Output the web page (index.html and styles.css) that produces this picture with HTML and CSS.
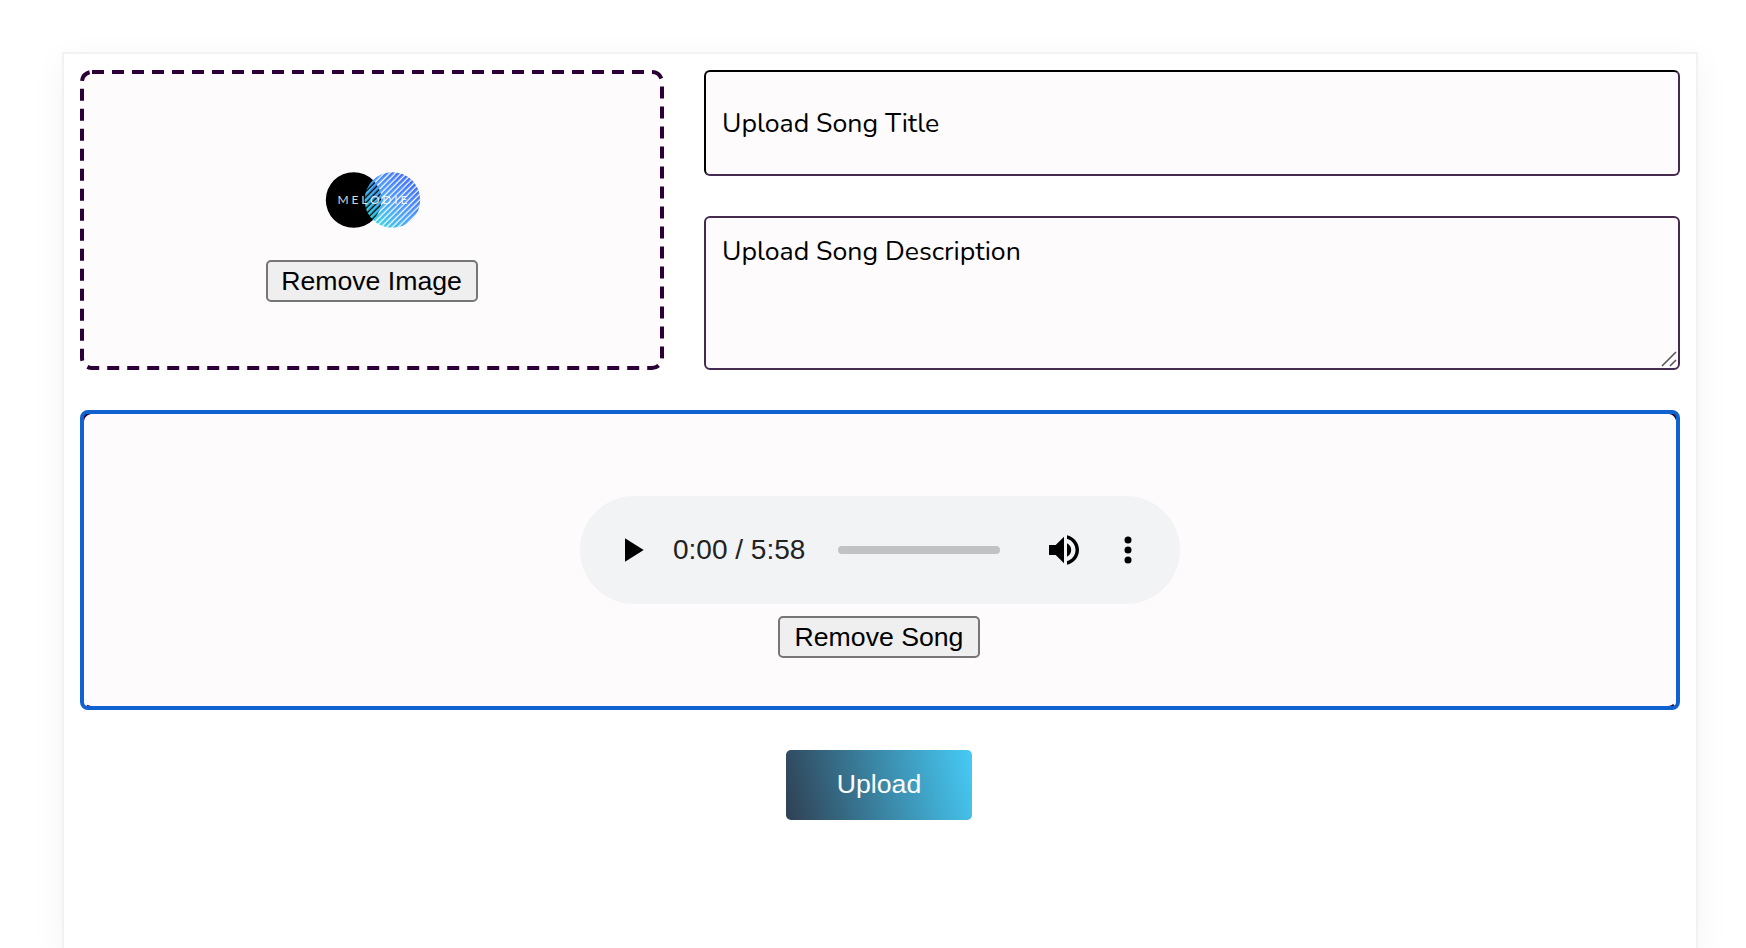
FILE: index.html
```html
<!DOCTYPE html>
<html lang="en">
<head>
<meta charset="utf-8">
<title>Upload Song</title>
<link rel="stylesheet" href="styles.css">
</head>
<body>
<main class="card">
  <div class="top-row">
    <section class="drop image-drop">
      <svg class="dashes" width="584" height="300"><rect x="2" y="2" width="580" height="296" rx="10"/></svg>
      <svg class="logo" width="96" height="58" viewBox="0 0 96 58">
        <defs>
          <linearGradient id="ring" x1="0" y1="1" x2="1" y2="0">
            <stop offset="0" stop-color="#2fe8dc"/>
            <stop offset=".5" stop-color="#4a9cfa"/>
            <stop offset="1" stop-color="#3b58f6"/>
          </linearGradient>
          <pattern id="lines" width="4" height="4" patternUnits="userSpaceOnUse" patternTransform="rotate(45)">
            <rect width="4" height="4" fill="#000"/>
            <rect width="2.700" height="4" fill="#fff"/>
          </pattern>
          <mask id="stripes"><rect width="96" height="58" fill="url(#lines)"/></mask>
        </defs>
        <circle cx="28.6" cy="29" r="27.8" fill="#000"/>
        <circle cx="67.4" cy="29" r="27.8" fill="url(#ring)" mask="url(#stripes)"/>
        <text class="logo-text" x="12.500" y="33.200" textLength="70">MELODIE</text>
      </svg>
      <button class="remove remove-image">Remove Image</button>
    </section>
    <div class="fields">
      <div class="field title">Upload Song Title</div>
      <div class="field description">Upload Song Description
        <svg class="grip" width="16" height="16" viewBox="0 0 16 16"><path d="M1 15 15 1M9 15l6-6" fill="none" stroke="#585858" stroke-width="1.6"/></svg>
      </div>
    </div>
  </div>
  <section class="drop song-drop">
    <svg class="dashes" width="1600" height="300"><rect x="2" y="2" width="1596" height="296" rx="10"/></svg>
    <div class="player">
      <svg class="play" width="20" height="24" viewBox="0 0 20 24"><path d="M0 .3v23.4L18.7 12z"/></svg>
      <span class="time">0:00 / 5:58</span>
      <span class="track"></span>
      <svg class="volume" width="30" height="30" viewBox="0 0 30 30"><path d="M0 10v10h6.700L15 28.300V1.700L6.700 10zM18 8.300v13.400c2.600-1.200 4.200-3.800 4.200-6.700S20.600 9.500 18 8.300zM18 .3v3.500c5 1.400 8.500 5.900 8.500 11.200S23 24.800 18 26.200v3.500c6.900-1.500 12-7.500 12-14.700S24.900 1.800 18 .3z"/></svg>
      <svg class="more" width="8" height="28" viewBox="0 0 8 28"><circle cx="4" cy="4" r="3.500"/><circle cx="4" cy="14" r="3.500"/><circle cx="4" cy="24" r="3.500"/></svg>
    </div>
    <button class="remove remove-song">Remove Song</button>
  </section>
  <button class="upload">Upload</button>
</main>
</body>
</html>
```
FILE: styles.css
```css
* { box-sizing: border-box; }
html { height: 948px; overflow: hidden; }
body {
  margin: 0;
  height: 948px;
  overflow: hidden;
  padding: 52px 48px 0 62px;
  background: #fff;
  font-family: "Liberation Sans", Arial, sans-serif;
}
.card {
  height: 896px;
  padding: 16px;
  border: 2px solid #f2f2f2;
  border-bottom: 0;
  background: #fff;
  box-shadow: 0 8px 32px rgba(0, 0, 0, .05);
  display: flex;
  flex-direction: column;
  align-items: center;
  gap: 40px;
}
.top-row {
  width: 100%;
  height: 300px;
  display: grid;
  grid-template-columns: 584px 1fr;
  gap: 40px;
}
.drop {
  position: relative;
  display: flex;
  flex-direction: column;
  align-items: center;
  border-radius: 12px;
  background: #fdfbfc;
}
.dashes { position: absolute; inset: 0; }
.dashes rect {
  fill: none;
  stroke: #2b0036;
  stroke-width: 4;
  stroke-dasharray: 12 8;
}
.song-drop .dashes rect { stroke-dasharray: 12 7.96; }
.image-drop { padding-top: 101px; }
.logo { display: block; margin: 0 0 31px 2px; }
.logo-text {
  font-family: Lato, sans-serif;
  font-size: 12px;
  fill: #fff;
  fill-opacity: .85;
}
.remove {
  height: 42px;
  padding: 0;
  border: 2px solid #767676;
  border-radius: 5px;
  background: #efefef;
  color: #000;
  font: 26.667px/36px "Liberation Sans", Arial, sans-serif;
}
.remove-image { width: 212px; padding-right: 1px; }
.remove-song { width: 202px; margin-right: 2px; }
.fields {
  display: grid;
  grid-template-rows: 106px 154px;
  gap: 40px;
}
.field {
  padding: 0 16px;
  border: 2px solid #452b50;
  border-radius: 6px;
  background: #fdfbfc;
  color: #000;
  font-family: Nunito, Lato, sans-serif;
  font-size: 26.667px;
  line-height: 36px;
}
.title {
  display: flex;
  align-items: center;
  border-top-color: #000;
  border-left-color: #000;
}
.description { position: relative; padding-top: 15px; }
.grip { position: absolute; right: 1px; bottom: 1px; }
.song-drop {
  width: 100%;
  height: 300px;
  padding-top: 86px;
}
.song-drop::after {
  content: "";
  position: absolute;
  inset: 0;
  border: 4px solid #0f62cf;
  border-radius: 8px;
  pointer-events: none;
}
.player {
  width: 600px;
  height: 108px;
  margin-bottom: 12px;
  padding-left: 45px;
  display: flex;
  align-items: center;
  border-radius: 54px;
  background: #f1f3f4;
}
.time {
  width: 165px;
  margin-left: 28px;
  color: #222;
  font-size: 28px;
  white-space: nowrap;
}
.track {
  width: 162px;
  height: 8px;
  border-radius: 4px;
  background: #c1c2c3;
}
.volume { margin-left: 49px; }
.more { margin-left: 45px; }
.upload {
  width: 186px;
  height: 70px;
  margin-right: 2px;
  padding: 0 0 1px;
  border: 0;
  border-radius: 5px;
  background: linear-gradient(76deg, #2f4053, #46cbf6);
  color: #fff;
  font: 26.667px "Liberation Sans", Arial, sans-serif;
}
```
